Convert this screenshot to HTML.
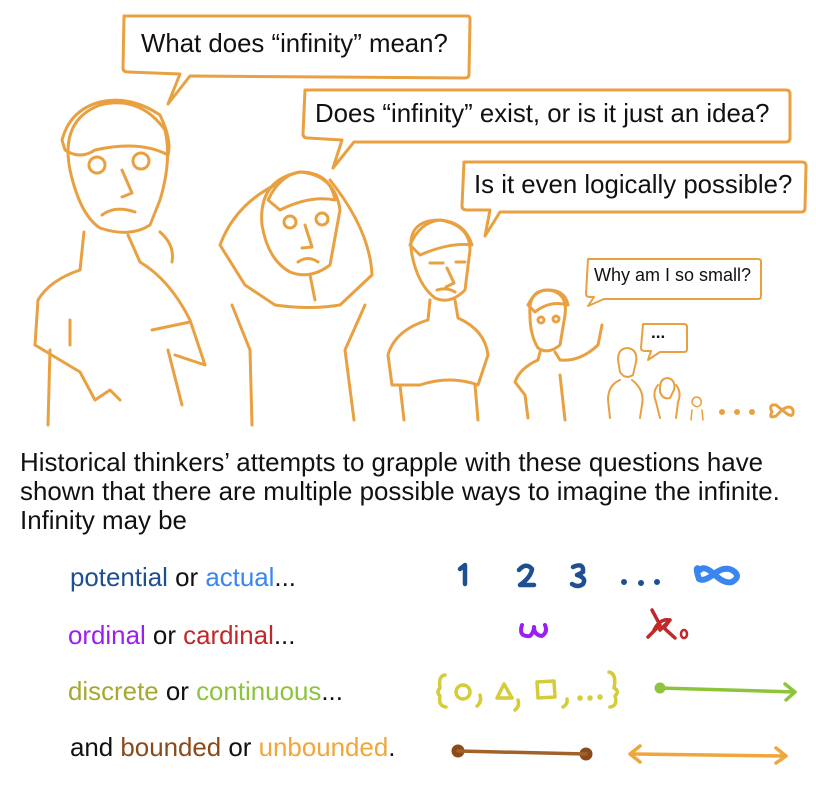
<!DOCTYPE html>
<html><head><meta charset="utf-8"><style>
body{margin:0;background:#fff;width:816px;height:792px;overflow:hidden;position:relative;font-family:"Liberation Sans",sans-serif;}
.t{position:absolute;white-space:nowrap;color:#111;line-height:29px;}
</style></head><body>
<svg width="816" height="792" style="position:absolute;left:0;top:0" fill="none" stroke="#e9a040" stroke-width="3" stroke-linecap="round" stroke-linejoin="round">
<path d="M124,16 L468,16 Q470,16 470,20 L469,74 Q469,78 465,78 L190,76 L168,104 L180,74 L128,72 Q123,72 123,68 Z" fill="#fff"/>
<path d="M305,90 L786,90 Q790,90 790,94 L790,138 Q790,142 786,142 L354,142 L333,168 L342,140 L308,138 Q303,138 303,134 Z" fill="#fff"/>
<path d="M464,162 L802,162 Q806,162 806,166 L805,208 Q805,212 801,212 L500,212 L485,236 L490,210 L467,210 Q462,210 462,206 Z" fill="#fff"/>
<path d="M588,259 L758,259 Q761,259 761,262 L761,296 Q761,299 758,299 L604,299 L588,306 L594,297 L590,297 Q586,297 586,294 Z" fill="#fff" stroke-width="2"/>
<path d="M643,324 L684,324 Q687,324 687,327 L687,349 Q687,352 684,352 L660,352 L648,360 L651,351 L645,351 Q641,351 641,348 Z" fill="#fff" stroke-width="2"/>
<!-- figure 1 -->
<path d="M70,170 Q60,120 100,105 Q140,95 165,130 Q172,160 160,200 L150,225 Q130,238 100,228 Q80,215 70,170 Z"/>
<path d="M62,140 Q70,110 100,102 Q130,95 160,115 Q172,140 168,155 Q140,140 95,150 Q80,160 65,150 Z"/>
<circle cx="97" cy="165" r="8"/><circle cx="141" cy="161" r="8"/>
<path d="M122,170 L132,193 L122,197"/><path d="M102,215 Q115,205 135,212"/>
<path d="M128,235 L140,262 Q170,280 190,320 L205,365 L175,355"/>
<path d="M160,232 Q175,245 172,262"/>
<path d="M84,232 L80,270 Q50,280 38,300 L35,345 L80,372 L95,400 L110,390 L120,400"/>
<path d="M50,350 L48,425"/><path d="M168,350 L182,405"/><path d="M70,320 L70,345"/><path d="M152,330 L190,322"/>
<!-- figure 2 -->
<path d="M262,225 Q258,180 300,172 Q335,175 340,210 L330,265 Q310,280 290,272 Q268,260 262,225 Z"/>
<path d="M268,200 Q280,175 300,172 Q330,172 335,200 Q310,195 280,210 Z"/>
<circle cx="290" cy="222" r="6"/><circle cx="322" cy="219" r="6"/>
<path d="M305,225 L312,247 L302,248"/><path d="M298,262 Q308,255 318,262"/>
<path d="M275,185 Q235,205 220,245 L245,285 L275,305 Q310,310 340,305 L372,275 Q370,230 330,180"/>
<path d="M232,305 L250,350 L252,425"/><path d="M365,305 L345,350 L354,420"/><path d="M310,275 L315,300"/>
<!-- figure 3 -->
<path d="M412,255 Q405,220 440,220 Q470,225 470,250 L465,290 Q450,305 435,298 Q418,285 412,255 Z"/>
<path d="M410,245 Q420,222 440,220 Q465,222 472,245 Q450,242 420,255 Z"/>
<path d="M430,263 L443,263 M456,262 L465,262"/><path d="M447,268 L454,283 L446,287"/><path d="M437,290 Q447,287 455,292"/>
<path d="M430,300 L428,320 Q395,330 388,355 L392,385 L420,385 Q450,375 478,385 L488,355 Q485,330 458,318 L455,300"/>
<path d="M400,385 L404,420"/><path d="M475,385 L478,420"/>
<!-- figure 4 -->
<path d="M530,315 Q528,290 548,290 Q568,292 565,315 L560,345 Q548,355 538,348 Q530,335 530,315 Z"/>
<path d="M528,305 Q535,290 548,290 Q565,290 568,305 Q550,300 535,312 Z"/>
<circle cx="541" cy="320" r="3"/><circle cx="556" cy="319" r="3"/>
<path d="M540,352 L538,360 Q520,368 515,382 L525,395 L528,418 M555,352 L560,360 Q580,362 598,345 L602,325 M560,375 L565,420"/>
<path d="M618,360 Q618,348 628,348 Q638,350 636,362 L633,375 Q625,380 620,372 Z M620,380 Q608,385 608,400 L610,418 M632,380 Q645,390 642,405 L640,418" stroke-width="2"/>
<path d="M660,388 Q660,378 668,378 Q676,380 674,390 L670,398 Q663,400 660,392 Z M658,385 Q652,392 656,402 L660,418 M676,385 Q682,392 678,402 L676,418" stroke-width="2"/>
<path d="M692,403 Q692,397 697,397 Q702,398 701,404 Q697,410 692,403 Z M692,410 L691,420 M702,410 L703,420" stroke-width="1.5"/>
<circle cx="722" cy="412" r="1.5" fill="#e9a040"/><circle cx="737" cy="412" r="1.5" fill="#e9a040"/><circle cx="752" cy="412" r="1.5" fill="#e9a040"/>
<path d="M772,412 Q768,404 776,405 L786,413 Q794,419 793,410 Q790,404 782,410 L776,416 Q768,419 772,412 Z" stroke-width="3"/>
<!-- bottom graphics -->
<path d="M460,569 L465,565 L465,584" stroke="#1d4f91" stroke-width="4.5"/>
<path d="M519,570 Q526,562 532,569 Q531,577 520,585 L534,585" stroke="#1d4f91" stroke-width="4.5"/>
<path d="M573,567 Q584,562 583,572 L577,575 Q587,578 583,584 Q578,588 572,584" stroke="#1d4f91" stroke-width="4.5"/>
<circle cx="624" cy="582" r="1.5" fill="#1d4f91" stroke="#1d4f91"/><circle cx="641" cy="583" r="1.5" fill="#1d4f91" stroke="#1d4f91"/><circle cx="657" cy="582" r="1.5" fill="#1d4f91" stroke="#1d4f91"/>
<path d="M700,570 Q694,564 699,579 Q704,582 714,574 Q724,566 732,570 Q742,576 732,582 Q724,584 714,574 Q704,565 700,570 Z" stroke="#3a86f0" stroke-width="6"/>
<path d="M522,625 Q518,637 530,636 Q534,632 534,627 Q534,635 542,636 Q548,632 545,625" stroke="#9b1ff0" stroke-width="4"/>
<path d="M652,610 L660,625 L648,637 M654,630 Q660,618 670,620 L664,628 L675,638 M660,630 L670,620" stroke="#c0282a" stroke-width="3.5"/>
<ellipse cx="684" cy="634" rx="3" ry="4" stroke="#c0282a" stroke-width="2.5"/>
<g stroke="#d4cc3a" stroke-width="3.5">
<path d="M445,675 Q438,676 440,688 Q436,692 440,696 Q438,706 446,707"/>
<circle cx="463" cy="692" r="7"/><path d="M480,695 Q482,702 477,706"/>
<path d="M497,698 L504,684 L512,698 Z"/><path d="M518,700 Q520,706 515,710"/>
<path d="M537,682 L554,681 L555,697 L538,698 Z"/><path d="M567,699 Q568,704 563,707"/>
<circle cx="580" cy="698" r="1" fill="#d4cc3a"/><circle cx="590" cy="698" r="1" fill="#d4cc3a"/><circle cx="600" cy="697" r="1" fill="#d4cc3a"/>
<path d="M609,672 Q617,674 614,688 Q620,691 615,696 Q618,706 610,707"/>
</g>
<circle cx="660" cy="688" r="4" fill="#8dc43c" stroke="#8dc43c"/>
<path d="M660,688 L795,692 M785,684 L795,692 L786,700" stroke="#8dc43c" stroke-width="3.5"/>
<circle cx="458" cy="751" r="5" fill="#8b4a1a" stroke="#8b4a1a"/><circle cx="586" cy="754" r="5" fill="#8b4a1a" stroke="#8b4a1a"/>
<path d="M458,751 L586,754" stroke="#a0622a" stroke-width="3.5"/>
<path d="M632,754 L785,756 M640,746 L630,754 L640,762 M776,748 L786,756 L776,763" stroke="#f0a63a" stroke-width="3.5"/>
</svg>
<div class="t" style="left:141px;top:30px;font-size:25.8px">What does “infinity” mean?</div>
<div class="t" style="left:315px;top:100px;font-size:25.8px">Does “infinity” exist, or is it just an idea?</div>
<div class="t" style="left:474px;top:171px;font-size:25.8px">Is it even logically possible?</div>
<div class="t" style="left:594px;top:261px;font-size:18px">Why am I so small?</div>
<div class="t" style="left:651px;top:318px;font-size:17px;font-weight:bold">...</div>
<div class="t" style="left:20px;top:449px;font-size:25.9px;line-height:29px;white-space:normal;width:790px">Historical thinkers’ attempts to grapple with these questions have shown that there are multiple possible ways to imagine the infinite. Infinity may be</div>
<div class="t" style="left:70px;top:564px;font-size:25.9px"><span style="color:#1d4f91">potential</span> or <span style="color:#3a86f0">actual</span>...</div>
<div class="t" style="left:68px;top:622px;font-size:25.9px"><span style="color:#9b1ff0">ordinal</span> or <span style="color:#c0282a">cardinal</span>...</div>
<div class="t" style="left:68px;top:678px;font-size:25.9px"><span style="color:#a8a830">discrete</span> or <span style="color:#8dc43c">continuous</span>...</div>
<div class="t" style="left:70px;top:734px;font-size:25.9px">and <span style="color:#8b4a1a">bounded</span> or <span style="color:#f0a63a">unbounded</span>.</div>
</body></html>
